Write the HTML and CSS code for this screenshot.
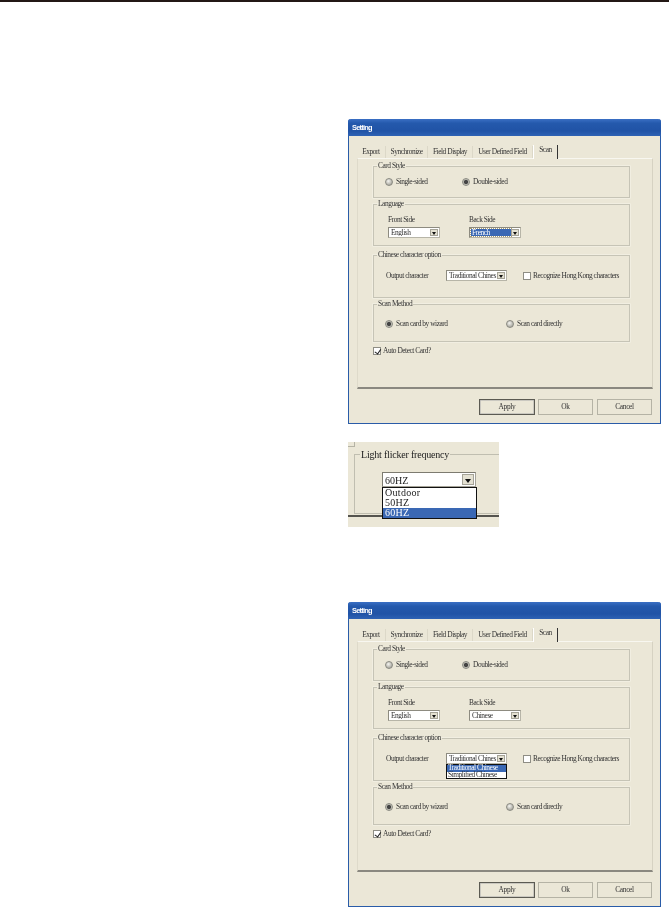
FILE: index.html
```html
<!DOCTYPE html>
<html lang="en">
<head>
<meta charset="utf-8">
<title>Setting</title>
<link rel="stylesheet" href="styles.css">
</head>
<body>
<div class="topbar"></div>
<main class="column">

<section class="dialog first">
  <div class="titlebar">Setting</div>
  <div class="body">
    <div class="tabs">
      <span class="tab t1">Export</span><span class="tab t2">Synchronize</span><span class="tab t3">Field Display</span><span class="tab t4">User Defined Field</span><span class="tab t5 active">Scan</span>
    </div>
    <div class="panel">
      <fieldset class="group g1">
        <legend>Card Style</legend>
        <div class="row r-card">
          <label class="opt o1"><i class="radio"></i>Single-sided</label>
          <label class="opt"><i class="radio on"></i>Double-sided</label>
        </div>
      </fieldset>
      <fieldset class="group g2">
        <legend>Language</legend>
        <div class="langs">
          <div class="lang"><span>Front Side</span><div class="combo"><span class="val">English</span><i class="arrow"></i></div></div>
          <div class="lang"><span>Back Side</span><div class="combo"><span class="val sel">French</span><i class="arrow"></i></div></div>
        </div>
      </fieldset>
      <fieldset class="group g3">
        <legend>Chinese character option</legend>
        <div class="row r-chi">
          <span class="out">Output character</span>
          <div class="combo chi"><span class="val">Traditional Chines</span><i class="arrow"></i></div>
          <label class="opt"><i class="check"></i>Recognize Hong Kong characters</label>
        </div>
      </fieldset>
      <fieldset class="group g4">
        <legend>Scan Method</legend>
        <div class="row r-scan">
          <label class="opt o2"><i class="radio on"></i>Scan card by wizard</label>
          <label class="opt"><i class="radio"></i>Scan card directly</label>
        </div>
      </fieldset>
      <label class="opt auto"><i class="check on"></i>Auto Detect Card?</label>
    </div>
    <div class="buttons">
      <button class="btn def">Apply</button><button class="btn ok">Ok</button><button class="btn">Cancel</button>
    </div>
  </div>
</section>

<section class="crop">
  <div class="prev"></div>
  <fieldset class="flicker">
    <legend>Light flicker frequency</legend>
    <div class="bigcombo"><span class="bigval">60HZ</span><i class="arrow big"></i>
      <ul class="biglist"><li>Outdoor</li><li>50HZ</li><li class="hl">60HZ</li></ul>
    </div>
  </fieldset>
  <div class="panelline"></div>
</section>

<section class="dialog last">
  <div class="titlebar">Setting</div>
  <div class="body">
    <div class="tabs">
      <span class="tab t1">Export</span><span class="tab t2">Synchronize</span><span class="tab t3">Field Display</span><span class="tab t4">User Defined Field</span><span class="tab t5 active">Scan</span>
    </div>
    <div class="panel">
      <fieldset class="group g1">
        <legend>Card Style</legend>
        <div class="row r-card">
          <label class="opt o1"><i class="radio"></i>Single-sided</label>
          <label class="opt"><i class="radio on"></i>Double-sided</label>
        </div>
      </fieldset>
      <fieldset class="group g2">
        <legend>Language</legend>
        <div class="langs">
          <div class="lang"><span>Front Side</span><div class="combo"><span class="val">English</span><i class="arrow"></i></div></div>
          <div class="lang"><span>Back Side</span><div class="combo"><span class="val">Chinese</span><i class="arrow"></i></div></div>
        </div>
      </fieldset>
      <fieldset class="group g3">
        <legend>Chinese character option</legend>
        <div class="row r-chi">
          <span class="out">Output character</span>
          <div class="combo chi"><span class="val">Traditional Chines</span><i class="arrow"></i>
            <ul class="list"><li class="hl">Traditional Chinese</li><li>Simplified Chinese</li></ul>
          </div>
          <label class="opt"><i class="check"></i>Recognize Hong Kong characters</label>
        </div>
      </fieldset>
      <fieldset class="group g4">
        <legend>Scan Method</legend>
        <div class="row r-scan">
          <label class="opt o2"><i class="radio on"></i>Scan card by wizard</label>
          <label class="opt"><i class="radio"></i>Scan card directly</label>
        </div>
      </fieldset>
      <label class="opt auto"><i class="check on"></i>Auto Detect Card?</label>
    </div>
    <div class="buttons">
      <button class="btn def">Apply</button><button class="btn ok">Ok</button><button class="btn">Cancel</button>
    </div>
  </div>
</section>

</main>
</body>
</html>
```

FILE: styles.css
```css
* { box-sizing: border-box; }
html, body { margin: 0; padding: 0; background: #fff; }
body { width: 669px; height: 907px; overflow: hidden; font-family: "Liberation Serif", serif; color: #333; }
.topbar { height: 2px; background: #231815; }
.column { margin-left: 348px; width: 313px; display: flex; flex-direction: column; }

.dialog {
  height: 305px; display: flex; flex-direction: column;
  background: #ebe7d7; border: 1px solid #2a5ca8; border-top: 0; border-radius: 3px 3px 0 0;
  font-size: 7.4px; line-height: 9px; letter-spacing: -.45px; filter: blur(0.4px);
}
.first { margin-top: 117px; }
.last { margin-top: 75px; }
.titlebar {
  height: 17px; margin: 0 -1px; padding: 3px 4px; border-radius: 3px 3px 0 0;
  background: linear-gradient(#3a6fc4 0, #2459ac 25%, #2053a6 70%, #2e62b4 100%);
  color: #fff; font: bold 7.4px/11px "Liberation Sans", sans-serif; letter-spacing: -.75px;
}
.body { flex: 1; display: flex; flex-direction: column; padding: 8px 7px 0 8px; }

.tabs { display: flex; height: 14px; align-items: flex-end; }
.tab { height: 12px; padding-top: 1px; text-align: center; border-right: 1px solid #dcd8c8; white-space: nowrap; }
.t1 { width: 29px; }
.t2 { width: 42px; }
.t3 { width: 45px; }
.t4 { width: 60px; }
.t5 { width: 25px; }
.tab.active { height: 14px; padding-top: 0; background: #ebe7d7; border-left: 1px solid #fff; border-right: 1px solid #333; margin-bottom: -1px; position: relative; }

.panel {
  height: 231px; display: flex; flex-direction: column; padding-left: 15px; padding-right: 22px;
  border: 1px solid #dedaca; border-top-color: #f8f7f0; border-right-color: #d6d2c2; border-bottom: 2px solid #8a8880;
}
.group { margin: 3px 0 0; padding: 0; min-width: 0; border: 1px solid #c6c4b6; box-shadow: 0 0 0 .5px #f6f4ea; width: 257px; }
.group legend { margin-left: 3px; padding: 0 1px; line-height: 8px; font-size: 7.4px; }
.g1 { height: 36px; }
.g2 { height: 46px; margin-top: 2px; }
.g3 { height: 47px; margin-top: 5px; }
.g4 { height: 42px; margin-top: 2px; }

.row { display: flex; align-items: center; }
.r-card { padding: 7px 0 0 11px; }
.o1 { width: 77px; }
.r-scan { padding: 11px 0 0 11px; }
.o2 { width: 121px; }
.r-chi { padding: 11px 0 0 12px; }
.out { width: 60px; }
.opt { display: flex; align-items: center; gap: 2px; white-space: nowrap; }
.radio {
  width: 8px; height: 8px; border-radius: 50%; margin-right: 1px; flex: none;
  background: radial-gradient(circle at 40% 35%, #f4f4f0, #aaa9a0 75%); border: 1px solid #8a8a82;
}
.radio.on { background: radial-gradient(circle, #444 0 38%, #c6c5ba 62%); }
.check { width: 8px; height: 8px; flex: none; background: #fff; border: 1px solid #8e8d84; position: relative; }
.check.on::after { content: ""; position: absolute; left: 1.5px; top: 0; width: 3px; height: 4.5px; border: solid #222; border-width: 0 1.5px 1.5px 0; transform: rotate(35deg); }
.auto { margin-top: 4px; }

.langs { display: flex; gap: 29px; padding: 7px 0 0 14px; }
.lang { display: flex; flex-direction: column; gap: 3px; width: 52px; }
.combo { position: relative; display: flex; width: 52px; height: 11px; background: #fff; padding: 1px; border: 1px solid #b7b5a8; border-top-color: #8d8b80; border-left-color: #8d8b80; }
.val { flex: 1; padding-left: 1px; line-height: 8px; white-space: nowrap; overflow: hidden; }
.val.sel { background: #3a68b4; color: #fff; outline: 1px dotted #a89c70; }
.arrow { width: 8px; flex: none; background: #e4e1d2; border: 1px solid #a5a397; position: relative; }
.arrow::after { content: ""; position: absolute; left: 1px; top: 1.5px; border: 2px solid transparent; border-top: 3px solid #111; border-bottom: 0; }
.chi { width: 61px; margin-right: 16px; }
.list { position: absolute; left: -1px; top: 10px; width: 61px; margin: 0; padding: 0; list-style: none; background: #fff; border: 1px solid #111; z-index: 2; }
.list li { height: 6.5px; line-height: 6.5px; padding-left: 1px; white-space: nowrap; }
.hl { background: #3a68b4; color: #fff; }

.buttons { display: flex; gap: 3px; justify-content: flex-end; padding: 10px 1px 0 0; }
.btn { width: 55px; height: 16px; padding: 0; background: #ebe7d7; border: 1px solid #b5b3a5; font: 7.4px/12px "Liberation Serif", serif; letter-spacing: -.3px; color: #333; }
.btn.def { width: 56px; border: 1px solid #5b5a52; box-shadow: inset 0 0 0 .5px #aaa; }
.btn.ok { margin-right: 1px; }

.crop { position: relative; margin-top: 18px; width: 151px; height: 85px; background: #ebe7d7; overflow: hidden; filter: blur(0.35px); }
.prev { width: 7px; height: 5px; border: solid #b5b3a5; border-width: 0 1px 1px 0; }
.flicker { margin: 1px 0 0 6px; padding: 0; min-width: 0; height: 66px; width: 160px; border: 1px solid #c0beb0; }
.flicker legend { margin-left: 5px; padding: 0 1px; font: 10px/13px "Liberation Serif", serif; letter-spacing: -.2px; color: #222; }
.bigcombo { position: relative; display: flex; width: 94px; height: 15px; margin: 11px 0 0 27px; background: #fff; padding: 1px; border: 1px solid #a5a397; border-top-color: #7d7b70; border-left-color: #7d7b70; }
.bigval { flex: 1; font: 10px/13px "Liberation Serif", serif; padding-left: 1px; color: #222; }
.arrow.big { width: 12px; background: #e4e1d2; }
.arrow.big::after { left: 2px; top: 3.5px; border-width: 3px; border-top-width: 4px; border-bottom: 0; }
.biglist { position: absolute; left: -1px; top: 14px; width: 95px; height: 32px; margin: 0; padding: 0; list-style: none; background: #fff; border: 1px solid #111; font: 10px/10px "Liberation Serif", serif; letter-spacing: .3px; color: #222; z-index: 2; }
.biglist li { padding-left: 2px; height: 10px; }
.biglist .hl { color: #fff; }
.panelline { position: absolute; left: 0; right: 0; top: 73px; height: 2px; background: #55544e; }
```
